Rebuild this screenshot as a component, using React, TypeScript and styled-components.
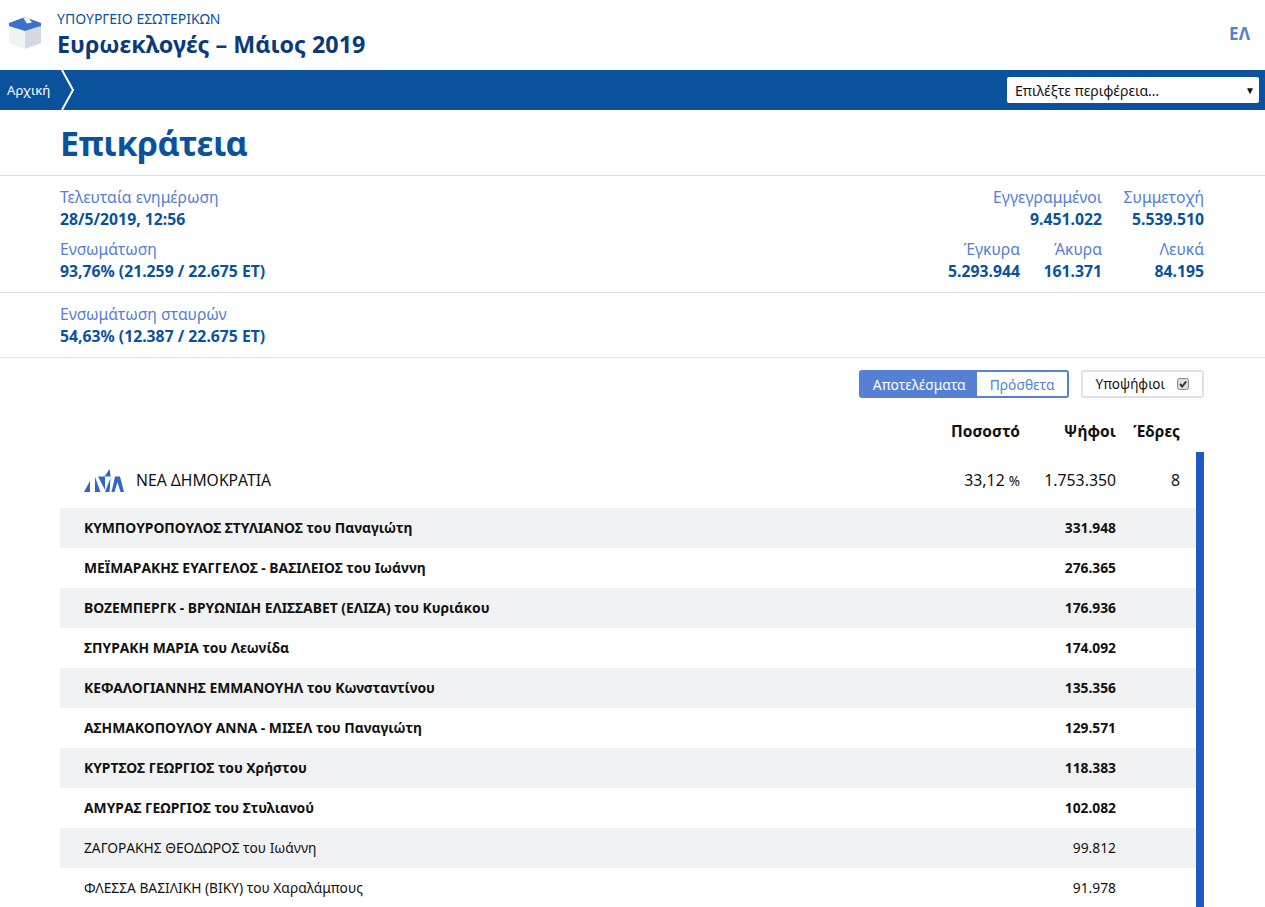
import React from 'react';
import styled, { createGlobalStyle } from 'styled-components';

const font = `"Noto Sans", "Open Sans", sans-serif`;

const GlobalStyle = createGlobalStyle`
  html, body {
    margin: 0;
    padding: 0;
    background: #fff;
    font-family: ${font};
    color: #111;
  }
  * { box-sizing: border-box; }
`;

const Page = styled.div`
  width: 1265px;
  height: 907px;
  overflow: hidden;
`;

const Header = styled.header`
  height: 70px;
  display: flex;
  align-items: center;
  padding: 0 15px 0 9px;
`;

const BoxIcon = styled.svg`
  width: 32px;
  height: 32px;
  margin: -4px 16px 0 0;
`;

const TitleBlock = styled.div`
  display: flex;
  flex-direction: column;
  flex: 1;
  margin-top: 2px;
`;

const Ministry = styled.div`
  font-size: 14px;
  line-height: 16px;
  margin-top: -1px;
  margin-bottom: 1px;
  color: #0a529c;
`;

const Election = styled.div`
  font-size: 23.3px;
  line-height: 32px;
  font-weight: 700;
  color: #0b3a7a;
`;

const Lang = styled.div`
  font-size: 17px;
  font-weight: 700;
  color: #5580d4;
  margin-top: -4px;
`;

const NavBar = styled.nav`
  height: 40px;
  background: #0a529c;
  display: flex;
  align-items: center;
  justify-content: space-between;
  padding: 0 6px 0 7px;
`;

const Crumb = styled.div`
  display: flex;
  align-items: center;
  gap: 11px;
  color: #fff;
  font-size: 13.2px;
`;

const Chevron = styled.svg`
  width: 14px;
  height: 40px;
  display: block;
`;

const RegionSelect = styled.div`
  width: 252px;
  height: 26px;
  background: #fff;
  border-radius: 2px;
  display: flex;
  align-items: center;
  justify-content: space-between;
  padding: 0 4px 0 8px;
  font-size: 14.1px;
  color: #111;
`;

const Caret = styled.span`
  font-size: 10px;
`;

const PageTitle = styled.h1`
  margin: 0;
  height: 66px;
  padding-left: 60px;
  font-size: 34px;
  letter-spacing: -0.5px;
  line-height: 66px;
  font-weight: 700;
  color: #0a529c;
  border-bottom: 1px solid #dcdfe3;
`;

const Summary = styled.section<{ $height: number }>`
  height: ${(p) => p.$height}px;
  padding: 10px 61px 0 60px;
  display: flex;
  justify-content: space-between;
  border-bottom: 1px solid #dcdfe3;
`;

const StatColumn = styled.div`
  display: flex;
  flex-direction: column;
  gap: 8px;
`;

const StatRow = styled.div`
  display: flex;
  justify-content: flex-end;
`;

const Stat = styled.div<{ $width?: number }>`
  width: ${(p) => (p.$width ? `${p.$width}px` : 'auto')};
  text-align: ${(p) => (p.$width ? 'right' : 'left')};
`;

const StatLabel = styled.div`
  font-size: 15.7px;
  line-height: 22px;
  color: #5580d4;
`;

const StatValue = styled.div`
  font-size: 15.75px;
  line-height: 22px;
  font-weight: 700;
  color: #0a529c;
`;

const Controls = styled.div`
  height: 52px;
  padding: 12px 61px 0 0;
  display: flex;
  justify-content: flex-end;
  gap: 12px;
`;

const Toggle = styled.div`
  display: flex;
  height: 28px;
  border: 2px solid #5580d4;
  border-radius: 3px;
  overflow: hidden;
  font-size: 13.8px;
`;

const ToggleItem = styled.div<{ $active?: boolean }>`
  display: flex;
  align-items: center;
  padding: ${(p) => (p.$active ? '0 11px 0 12px' : '0 12px 0 13px')};
  background: ${(p) => (p.$active ? '#5580d4' : '#fff')};
  color: ${(p) => (p.$active ? '#fff' : '#5580d4')};
`;

const CandidatesToggle = styled.label`
  display: flex;
  align-items: center;
  gap: 12px;
  height: 28px;
  padding: 0 13px;
  border: 2px solid #dde0e6;
  border-radius: 3px;
  font-size: 13.5px;
`;

const CheckMark = styled.svg`
  width: 12px;
  height: 12px;
`;

const Results = styled.div`
  margin: 0 61px 0 60px;
`;

const HeadRow = styled.div`
  height: 42px;
  display: grid;
  grid-template-columns: 1fr 100px 96px 64px 24px;
  align-items: center;
  font-size: 15.5px;
  font-weight: 700;
  text-align: right;
`;

const PartyList = styled.div`
  border-right: 8px solid #2159c4;
`;

const PartyRow = styled.div`
  height: 56px;
  display: grid;
  grid-template-columns: 1fr 100px 96px 64px 16px;
  align-items: center;
  font-size: 15.8px;
  text-align: right;
`;

const PartyName = styled.div`
  display: flex;
  align-items: center;
  gap: 11px;
  padding-left: 24px;
  font-size: 15.7px;
  text-align: left;
`;

const PartyLogo = styled.svg`
  width: 41px;
  height: 26px;
`;

const Percent = styled.span`
  font-size: 13.5px;
`;

const CandidateRow = styled.div<{ $shaded: boolean; $elected: boolean }>`
  height: 40px;
  padding: 0 0 2px 25px;
  display: grid;
  grid-template-columns: 1fr 96px 80px;
  align-items: center;
  font-weight: ${(p) => (p.$elected ? 700 : 400)};
  background: ${(p) => (p.$shaded ? '#f1f2f4' : '#fff')};
`;

const CandidateName = styled.div<{ $elected: boolean }>`
  font-size: ${(p) => (p.$elected ? '13.85px' : '13.75px')};
  margin-left: -1px;
`;

const Votes = styled.div`
  font-size: 13.8px;
  text-align: right;
`;

const candidates = [
  ['ΚΥΜΠΟΥΡΟΠΟΥΛΟΣ ΣΤΥΛΙΑΝΟΣ του Παναγιώτη', '331.948', true],
  ['ΜΕΪΜΑΡΑΚΗΣ ΕΥΑΓΓΕΛΟΣ - ΒΑΣΙΛΕΙΟΣ του Ιωάννη', '276.365', true],
  ['ΒΟΖΕΜΠΕΡΓΚ - ΒΡΥΩΝΙΔΗ ΕΛΙΣΣΑΒΕΤ (ΕΛΙΖΑ) του Κυριάκου', '176.936', true],
  ['ΣΠΥΡΑΚΗ ΜΑΡΙΑ του Λεωνίδα', '174.092', true],
  ['ΚΕΦΑΛΟΓΙΑΝΝΗΣ ΕΜΜΑΝΟΥΗΛ του Κωνσταντίνου', '135.356', true],
  ['ΑΣΗΜΑΚΟΠΟΥΛΟΥ ΑΝΝΑ - ΜΙΣΕΛ του Παναγιώτη', '129.571', true],
  ['ΚΥΡΤΣΟΣ ΓΕΩΡΓΙΟΣ του Χρήστου', '118.383', true],
  ['ΑΜΥΡΑΣ ΓΕΩΡΓΙΟΣ του Στυλιανού', '102.082', true],
  ['ΖΑΓΟΡΑΚΗΣ ΘΕΟΔΩΡΟΣ του Ιωάννη', '99.812', false],
  ['ΦΛΕΣΣΑ ΒΑΣΙΛΙΚΗ (ΒΙΚΥ) του Χαραλάμπους', '91.978', false],
] as const;

export default function App() {
  return (
    <Page>
      <GlobalStyle />
      <Header>
        <BoxIcon viewBox="0 0 32 32">
          <path d="M0 9 L16 14 L16 32 L0 26 Z" fill="#f1f2f4" />
          <path d="M32 9 L16 14 L16 32 L32 26 Z" fill="#d5d9de" />
          <path d="M0 6 L16 0 L32 6 L32 9 L16 14 L0 9 Z" fill="#3a72c8" />
          <path d="M14 0.5 L19 0 L23 5.5 L18 6.5 Z" fill="#f4f5f7" />
        </BoxIcon>
        <TitleBlock>
          <Ministry>ΥΠΟΥΡΓΕΙΟ ΕΣΩΤΕΡΙΚΩΝ</Ministry>
          <Election>Ευρωεκλογές – Μάιος 2019</Election>
        </TitleBlock>
        <Lang>ΕΛ</Lang>
      </Header>
      <NavBar>
        <Crumb>
          Αρχική
          <Chevron viewBox="0 0 14 40">
            <path d="M1 0 L12 20 L1 40" fill="none" stroke="#fff" strokeWidth="2" />
          </Chevron>
        </Crumb>
        <RegionSelect>
          Επιλέξτε περιφέρεια…
          <Caret>▼</Caret>
        </RegionSelect>
      </NavBar>
      <PageTitle>Επικράτεια</PageTitle>
      <Summary $height={117}>
        <StatColumn>
          <Stat>
            <StatLabel>Τελευταία ενημέρωση</StatLabel>
            <StatValue>28/5/2019, 12:56</StatValue>
          </Stat>
          <Stat>
            <StatLabel>Ενσωμάτωση</StatLabel>
            <StatValue>93,76% (21.259 / 22.675 ΕΤ)</StatValue>
          </Stat>
        </StatColumn>
        <StatColumn>
          <StatRow>
            <Stat $width={140}>
              <StatLabel>Εγγεγραμμένοι</StatLabel>
              <StatValue>9.451.022</StatValue>
            </Stat>
            <Stat $width={102}>
              <StatLabel>Συμμετοχή</StatLabel>
              <StatValue>5.539.510</StatValue>
            </Stat>
          </StatRow>
          <StatRow>
            <Stat $width={80}>
              <StatLabel>Έγκυρα</StatLabel>
              <StatValue>5.293.944</StatValue>
            </Stat>
            <Stat $width={82}>
              <StatLabel>Άκυρα</StatLabel>
              <StatValue>161.371</StatValue>
            </Stat>
            <Stat $width={102}>
              <StatLabel>Λευκά</StatLabel>
              <StatValue>84.195</StatValue>
            </Stat>
          </StatRow>
        </StatColumn>
      </Summary>
      <Summary $height={65}>
        <Stat>
          <StatLabel>Ενσωμάτωση σταυρών</StatLabel>
          <StatValue>54,63% (12.387 / 22.675 ΕΤ)</StatValue>
        </Stat>
      </Summary>
      <Controls>
        <Toggle>
          <ToggleItem $active>Αποτελέσματα</ToggleItem>
          <ToggleItem>Πρόσθετα</ToggleItem>
        </Toggle>
        <CandidatesToggle>
          Υποψήφιοι
          <CheckMark viewBox="0 0 12 12">
            <rect x="0.5" y="0.5" width="11" height="11" rx="2" fill="#ddd" stroke="#888" />
            <path d="M3 6 L5.2 8.5 L9.2 3.5" fill="none" stroke="#333" strokeWidth="2" />
          </CheckMark>
        </CandidatesToggle>
      </Controls>
      <Results>
        <HeadRow>
          <span />
          <span>Ποσοστό</span>
          <span>Ψήφοι</span>
          <span>Έδρες</span>
          <span />
        </HeadRow>
        <PartyList>
          <PartyRow>
            <PartyName>
              <PartyLogo viewBox="0 0 41 26">
                <path d="M0 25 L6 14 L6 25 Z" fill="#2f66c8" />
                <path d="M11 10 L16.5 25 L11 25 Z" fill="#2f66c8" />
                <path d="M14 9.5 L21 9.5 L21 23 Z" fill="#2f66c8" />
                <path d="M25.5 2 L26.7 9.5 L20.5 9.5 Z" fill="#2f66c8" />
                <path d="M26.5 11 L21 25 L25.5 25 Z" fill="#2f66c8" />
                <path d="M31 9.5 L36 9.5 L40 25 L36.5 25 L33.5 15 L30.5 25 L27.5 25 Z" fill="#2f66c8" />
              </PartyLogo>
              ΝΕΑ ΔΗΜΟΚΡΑΤΙΑ
            </PartyName>
            <div>33,12 <Percent>%</Percent></div>
            <div>1.753.350</div>
            <div>8</div>
            <span />
          </PartyRow>
          {candidates.map(([name, votes, elected], i) => (
            <CandidateRow key={name} $shaded={i % 2 === 0} $elected={elected}>
              <CandidateName $elected={elected}>{name}</CandidateName>
              <Votes>{votes}</Votes>
              <span />
            </CandidateRow>
          ))}
        </PartyList>
      </Results>
    </Page>
  );
}
